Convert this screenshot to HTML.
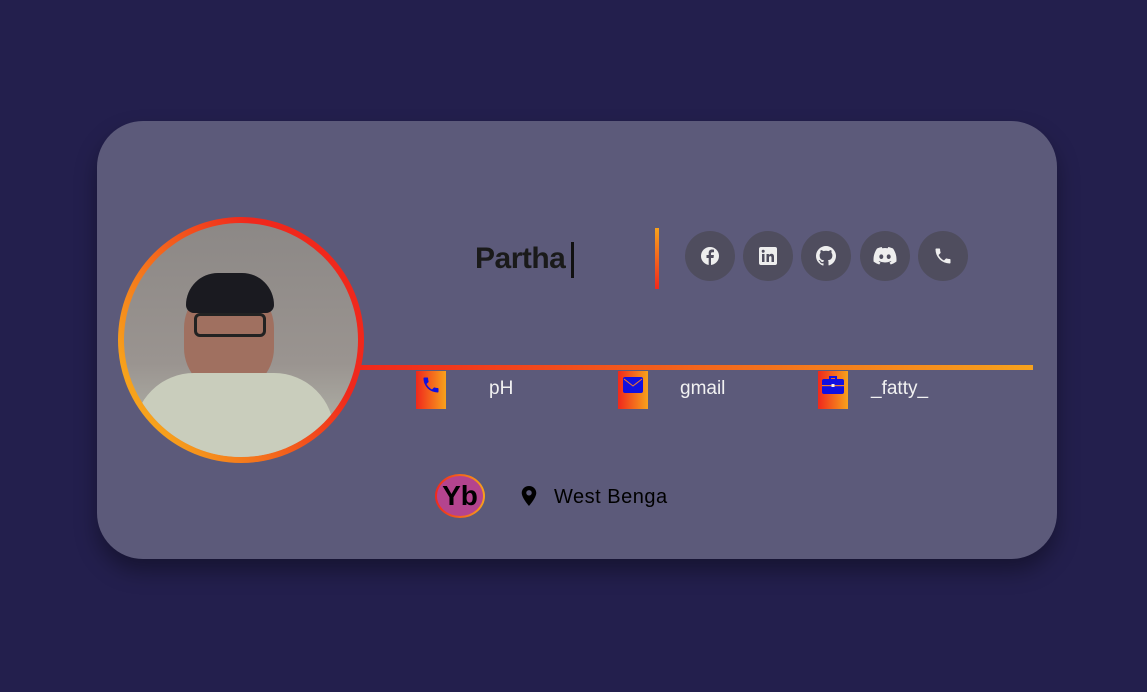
<!DOCTYPE html><html><head><style>
body{margin:0;width:1147px;height:692px;background:#231f4d;font-family:"Liberation Sans",sans-serif;position:relative;overflow:hidden}
.a{position:absolute}
.card{left:97px;top:121px;width:960px;height:438px;border-radius:46px;background:#5c5a7a;box-shadow:0 12px 22px rgba(0,0,0,.35)}
.sc{width:50px;height:50px;border-radius:50%;background:#4f4d5e;top:231px;display:flex;align-items:center;justify-content:center}
.ib{width:30px;height:38px;top:371px;background:linear-gradient(90deg,#f0281c,#f7a21c);display:flex;justify-content:center;padding-top:4px;box-sizing:border-box}
.t{color:#f2f2f2;font-size:19px;top:378px}
</style></head><body>
<div class="a card"></div>
<div class="a" style="left:360px;top:365px;width:673px;height:5px;background:linear-gradient(90deg,#f0281c,#f7a21c)"></div>
<div class="a" style="left:118px;top:217px;width:246px;height:246px;border-radius:50%;background:linear-gradient(240deg,#f0281c 30%,#f7a21c 85%)"></div>
<div class="a" style="left:124px;top:223px;width:234px;height:234px;border-radius:50%;overflow:hidden;background:linear-gradient(180deg,#8c8886,#9a9490 60%,#b8bcb0)">
<div class="a" style="left:60px;top:60px;width:90px;height:110px;border-radius:45px;background:#a07060"></div>
<div class="a" style="left:62px;top:50px;width:88px;height:40px;border-radius:40px 40px 10px 10px;background:#1a1a20"></div>
<div class="a" style="left:70px;top:90px;width:72px;height:24px;border:3px solid #222;border-radius:6px;box-sizing:border-box"></div>
<div class="a" style="left:10px;top:150px;width:200px;height:120px;border-radius:60px 60px 0 0;background:#c9cdbc"></div>
</div>
<div class="a" style="left:475px;top:242px;font-size:30px;font-weight:bold;color:#1a1a1a;letter-spacing:-0.5px">Partha</div>
<div class="a" style="left:571px;top:242px;width:3px;height:36px;background:#111"></div>
<div class="a" style="left:655px;top:228px;width:4px;height:61px;background:linear-gradient(180deg,#f7a21c,#f0281c)"></div>
<div class="a sc" style="left:685px"><svg width="20" height="20" viewBox="0 0 20 20"><circle cx="10" cy="10" r="9" fill="#eee"/><path d="M11 20V12h2.5l.4-3H11V7.5c0-.8.3-1.3 1.4-1.3H14V3.6c-.4 0-1.2-.1-2-.1-2 0-3.3 1.2-3.3 3.4V9H6.5v3h2.2v8z" fill="#4f4d5e"/></svg></div>
<div class="a sc" style="left:743px"><svg width="18" height="18" viewBox="0 0 18 18"><rect width="18" height="18" rx="2" fill="#eee"/><rect x="3" y="7" width="2.5" height="8" fill="#4f4d5e"/><circle cx="4.2" cy="4.3" r="1.5" fill="#4f4d5e"/><path d="M7.5 7h2.4v1.2c.5-.9 1.5-1.4 2.6-1.4 2 0 2.5 1.3 2.5 3.2V15h-2.5v-4.2c0-1-.2-1.7-1.2-1.7S10 9.8 10 10.8V15H7.5z" fill="#4f4d5e"/></svg></div>
<div class="a sc" style="left:801px"><svg width="20" height="20" viewBox="0 0 16 16"><path fill="#eee" d="M8 0C3.6 0 0 3.6 0 8c0 3.5 2.300 6.5 5.5 7.6.4.1.5-.2.5-.4v-1.4c-2.2.5-2.7-1-2.7-1-.4-.9-.9-1.2-.9-1.2-.7-.5.1-.5.1-.5.8.1 1.2.8 1.2.8.7 1.3 1.9.9 2.300.7.1-.5.3-.9.5-1.1-1.8-.2-3.6-.9-3.6-4 0-.9.3-1.6.8-2.1-.1-.2-.4-1 .1-2.1 0 0 .7-.2 2.200.8.6-.2 1.3-.3 2-.3s1.4.1 2 .3c1.5-1 2.200-.8 2.200-.8.4 1.1.2 1.9.1 2.1.5.6.8 1.3.8 2.1 0 3.1-1.9 3.7-3.6 3.9.3.3.5.8.5 1.5v2.200c0 .2.1.5.6.4C13.7 14.5 16 11.5 16 8c0-4.4-3.6-8-8-8z"/></svg></div>
<div class="a sc" style="left:860px"><svg width="24" height="18" viewBox="0 0 24 18"><path fill="#eee" d="M20 1.5A19 19 0 0 0 15.3 0l-.6 1.2a18 18 0 0 0-5.4 0L8.7 0A19 19 0 0 0 4 1.5C1 6 .2 10.3.6 14.6A19 19 0 0 0 6.3 17.5l1.2-2c-.7-.3-1.3-.6-1.9-1l.5-.4a13.6 13.6 0 0 0 11.8 0l.5.4c-.6.4-1.2.7-1.9 1l1.2 2a19 19 0 0 0 5.7-2.9c.5-5-.8-9.3-3.4-13.1zM8.3 12c-1.1 0-2-1-2-2.3s.9-2.3 2-2.3 2 1 2 2.3-.9 2.3-2 2.3zm7.4 0c-1.1 0-2-1-2-2.3s.9-2.3 2-2.3 2 1 2 2.3-.9 2.3-2 2.3z"/></svg></div>
<div class="a sc" style="left:918px"><svg width="20" height="20" viewBox="0 0 24 24"><path fill="#eee" d="M6.6 10.8a15.1 15.1 0 0 0 6.6 6.6l2.2-2.2c.3-.3.7-.4 1-.2 1.1.4 2.3.6 3.6.6.6 0 1 .4 1 1V20c0 .6-.4 1-1 1A17 17 0 0 1 3 4c0-.6.4-1 1-1h3.5c.6 0 1 .4 1 1 0 1.3.2 2.5.6 3.6.1.3 0 .7-.2 1z"/></svg></div>
<div class="a ib" style="left:416px"><svg width="20" height="20" viewBox="0 0 24 24"><path fill="#1010e0" d="M6.6 10.8a15.1 15.1 0 0 0 6.6 6.6l2.2-2.2c.3-.3.7-.4 1-.2 1.1.4 2.3.6 3.6.6.6 0 1 .4 1 1V20c0 .6-.4 1-1 1A17 17 0 0 1 3 4c0-.6.4-1 1-1h3.5c.6 0 1 .4 1 1 0 1.3.2 2.5.6 3.6.1.3 0 .7-.2 1z"/></svg></div>
<div class="a t" style="left:489px">pH</div>
<div class="a ib" style="left:618px"><svg width="20" height="16" viewBox="0 0 20 16" style="margin-top:2px"><rect width="20" height="16" rx="2" fill="#1010e0"/><path d="M1 2l9 7 9-7" stroke="#f07a30" fill="none" stroke-width="1"/></svg></div>
<div class="a t" style="left:680px">gmail</div>
<div class="a ib" style="left:818px"><svg width="22" height="20" viewBox="0 0 22 20"><path d="M8 4V2h6v2" stroke="#1010e0" stroke-width="2" fill="none"/><rect y="4" width="22" height="15" rx="2" fill="#1010e0"/><rect x="0" y="10" width="22" height="1.2" fill="#f07a30"/><rect x="9.5" y="9" width="3" height="3" fill="#eee"/></svg></div>
<div class="a t" style="left:871px">_fatty_</div>
<div class="a" style="left:435px;top:474px;width:50px;height:44px;border-radius:50%;background:linear-gradient(90deg,#f0281c,#f7a21c)"></div>
<div class="a" style="left:437px;top:476px;width:46px;height:40px;border-radius:50%;background:#b4448e;text-align:center;font-size:28px;font-weight:bold;line-height:40px;color:#000">Yb</div>
<svg class="a" style="left:521px;top:486px" width="16" height="20" viewBox="0 0 16 22"><path d="M8 0C3.6 0 0 3.4 0 7.6 0 13 8 22 8 22s8-9 8-14.4C16 3.400 12.4 0 8 0zm0 10.5a3 3 0 1 1 0-6 3 3 0 0 1 0 6z" fill="#000"/></svg>
<div class="a" style="left:554px;top:486px;font-size:20px;color:#000;letter-spacing:.5px">West Benga</div>
</body></html>
